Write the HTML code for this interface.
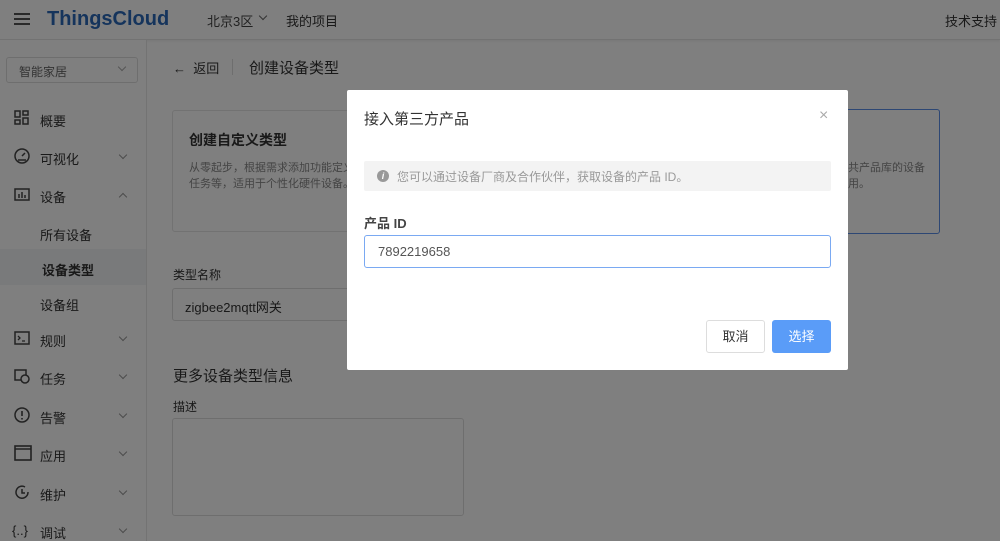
<!DOCTYPE html>
<html><head><meta charset="utf-8"><style>
*{box-sizing:border-box;margin:0;padding:0}
html,body{width:1000px;height:541px;overflow:hidden}
body{position:relative;background:#fff;font-family:"Liberation Sans","Noto Sans CJK SC",sans-serif;color:#333;font-size:13px}
.hdr{position:absolute;left:0;top:0;width:1000px;height:40px;background:#fff;border-bottom:1px solid #e4e4e4;box-shadow:0 1px 3px rgba(0,0,0,.08)}
.abs{position:absolute;white-space:nowrap}
.side{position:absolute;left:0;top:40px;width:147px;height:501px;border-right:1px solid #e6e6e6;background:#fff;overflow:hidden}
.mi{position:absolute;left:14px;width:120px;height:18px;font-size:13px;color:#333;white-space:nowrap}
.mi svg{position:absolute;left:0;top:-1px}
.mi span{position:absolute;left:26px;top:0;white-space:nowrap}
.chev{position:absolute;left:120px;width:6px;height:6px;border-right:1px solid #999;border-bottom:1px solid #999;transform:rotate(45deg)}
.ov{position:absolute;left:0;top:0;width:1000px;height:541px;background:rgba(0,0,0,.5)}
.modal{position:absolute;left:347px;top:90px;width:501px;height:280px;background:#fff;border-radius:2px}
</style></head><body>
<div class="hdr">
<div class="abs" style="left:14px;top:13px;width:16px;height:2px;background:#555;box-shadow:0 5px 0 #555,0 10px 0 #555"></div>
<div class="abs" style="left:47px;top:8px;font-size:20px;font-weight:bold;color:#2a68b8">ThingsCloud</div>
<div class="abs" style="left:207px;top:11px;font-size:13px;color:#444">北京3区</div>
<div class="abs" style="left:260px;top:13px;width:6px;height:6px;border-right:1px solid #666;border-bottom:1px solid #666;transform:rotate(45deg)"></div>
<div class="abs" style="left:286px;top:11px;color:#333">我的项目</div>
<div class="abs" style="left:945px;top:11px;color:#333">技术支持</div>
</div>
<div class="side">
<div class="abs" style="left:6px;top:17px;width:132px;height:26px;border:1px solid #ddd;border-radius:3px;font-size:12px;color:#666;padding:5px 12px">智能家居</div>
<div class="abs" style="left:119px;top:24px;width:6px;height:6px;border-right:1px solid #aaa;border-bottom:1px solid #aaa;transform:rotate(45deg)"></div>
<div class="mi" style="top:71px"><svg width="16" height="16"><g fill="none" stroke="#444" stroke-width="1.5"><rect x="1" y="1" width="5" height="6"/><rect x="9" y="1" width="5" height="4"/><rect x="1" y="10" width="5" height="4"/><rect x="9" y="8" width="5" height="6"/></g></svg><span>概要</span></div>
<div class="mi" style="top:109px"><svg width="16" height="16"><circle cx="8" cy="8" r="7" fill="none" stroke="#444" stroke-width="1.5"/><path d="M8 8l3-3M4 12h8" stroke="#444" stroke-width="1.5"/></svg><span>可视化</span><i class="chev" style="top:3px;left:106px"></i></div>
<div class="mi" style="top:147px"><svg width="16" height="16"><rect x="1" y="3" width="14" height="11" fill="none" stroke="#444" stroke-width="1.5"/><path d="M5 12V8M8 12V6M11 12V9" stroke="#444" stroke-width="1.5"/></svg><span>设备</span><i class="chev" style="top:7px;left:106px;transform:rotate(225deg)"></i></div>
<div class="mi" style="top:185px;left:40px">所有设备</div>
<div class="abs" style="left:0;top:209px;width:146px;height:36px;background:#f2f4f7"></div>
<div class="mi" style="top:220px;left:42px;font-weight:bold">设备类型</div>
<div class="mi" style="top:255px;left:40px">设备组</div>
<div class="mi" style="top:291px"><svg width="16" height="16"><rect x="1" y="2" width="14" height="12" fill="none" stroke="#444" stroke-width="1.5"/><path d="M4 6l2 2-2 2M8 11h3" fill="none" stroke="#444" stroke-width="1.3"/></svg><span>规则</span><i class="chev" style="top:3px;left:106px"></i></div>
<div class="mi" style="top:329px"><svg width="16" height="16"><rect x="1" y="2" width="11" height="10" fill="none" stroke="#444" stroke-width="1.5"/><circle cx="11" cy="11" r="4" fill="#fff" stroke="#444" stroke-width="1.5"/></svg><span>任务</span><i class="chev" style="top:3px;left:106px"></i></div>
<div class="mi" style="top:368px"><svg width="16" height="16"><circle cx="8" cy="8" r="7" fill="none" stroke="#444" stroke-width="1.5"/><path d="M8 4v5M8 11v1.5" stroke="#444" stroke-width="1.6"/></svg><span>告警</span><i class="chev" style="top:3px;left:106px"></i></div>
<div class="mi" style="top:406px"><svg width="18" height="16"><rect x="1" y="1" width="16" height="14" fill="none" stroke="#444" stroke-width="1.6"/><path d="M1 4h16" stroke="#444" stroke-width="1.5"/></svg><span>应用</span><i class="chev" style="top:3px;left:106px"></i></div>
<div class="mi" style="top:445px"><svg width="16" height="16"><path d="M14 8A6 6 0 1 1 11 3" fill="none" stroke="#444" stroke-width="1.5"/><path d="M8 5v4h3" fill="none" stroke="#444" stroke-width="1.5"/></svg><span>维护</span><i class="chev" style="top:3px;left:106px"></i></div>
<div class="mi" style="top:483px;left:12px"><span style="left:0;font-size:13px">{..}</span><span style="left:28px">调试</span><i class="chev" style="top:3px;left:108px"></i></div>
</div>
<div class="abs" style="left:173px;top:58px;font-size:13px">←&nbsp; 返回</div>
<div class="abs" style="left:232px;top:59px;width:1px;height:16px;background:#ddd"></div>
<div class="abs" style="left:249px;top:57px;font-size:15px">创建设备类型</div>
<div class="abs" style="left:172px;top:110px;width:200px;height:122px;border:1px solid #e4e4e4;border-radius:3px"></div>
<div class="abs" style="left:189px;top:130px;font-size:14px;font-weight:bold">创建自定义类型</div>
<div class="abs" style="left:189px;top:160px;font-size:11px;color:#888;line-height:16px">从零起步，根据需求添加功能定义<br>任务等，适用于个性化硬件设备。</div>
<div class="abs" style="left:800px;top:109px;width:140px;height:125px;border:1px solid #5a8ee8;border-radius:3px"></div>
<div class="abs" style="left:848px;top:160px;font-size:11px;color:#888;line-height:16px">共产品库的设备<br>用。</div>
<div class="abs" style="left:173px;top:266px;font-size:12px">类型名称</div>
<div class="abs" style="left:172px;top:288px;width:200px;height:33px;border:1px solid #ddd;border-radius:3px;padding:8px 12px;font-size:13px">zigbee2mqtt网关</div>
<div class="abs" style="left:173px;top:365px;font-size:15px">更多设备类型信息</div>
<div class="abs" style="left:173px;top:398px;font-size:12px">描述</div>
<div class="abs" style="left:172px;top:418px;width:292px;height:98px;border:1px solid #ddd;border-radius:3px"></div>
<div class="ov"></div>
<div class="modal">
<div class="abs" style="left:17px;top:18px;font-size:15px;color:#333">接入第三方产品</div>
<div class="abs" style="left:472px;top:17px;font-size:16px;color:#aaa">×</div>
<div class="abs" style="left:17px;top:71px;width:467px;height:30px;background:#f3f3f3;border-radius:2px"></div>
<div class="abs" style="left:30px;top:80px;width:12px;height:12px;border-radius:50%;background:#999;color:#fff;font-size:9px;font-style:italic;font-weight:bold;text-align:center;line-height:12px">i</div>
<div class="abs" style="left:50px;top:78px;font-size:12px;color:#999">您可以通过设备厂商及合作伙伴，获取设备的产品 ID。</div>
<div class="abs" style="left:17px;top:123px;font-size:13px;font-weight:bold;color:#444">产品 ID</div>
<div class="abs" style="left:17px;top:145px;width:467px;height:33px;border:1px solid #7aa9f2;border-radius:3px;padding:8px 13px;font-size:13px;color:#555">7892219658</div>
<div class="abs" style="left:359px;top:230px;width:59px;height:33px;border:1px solid #ddd;border-radius:3px;text-align:center;line-height:31px;font-size:13px">取消</div>
<div class="abs" style="left:425px;top:230px;width:59px;height:33px;background:#5a9cf8;border-radius:3px;text-align:center;line-height:33px;font-size:13px;color:#fff">选择</div>
</div>
</body></html>
